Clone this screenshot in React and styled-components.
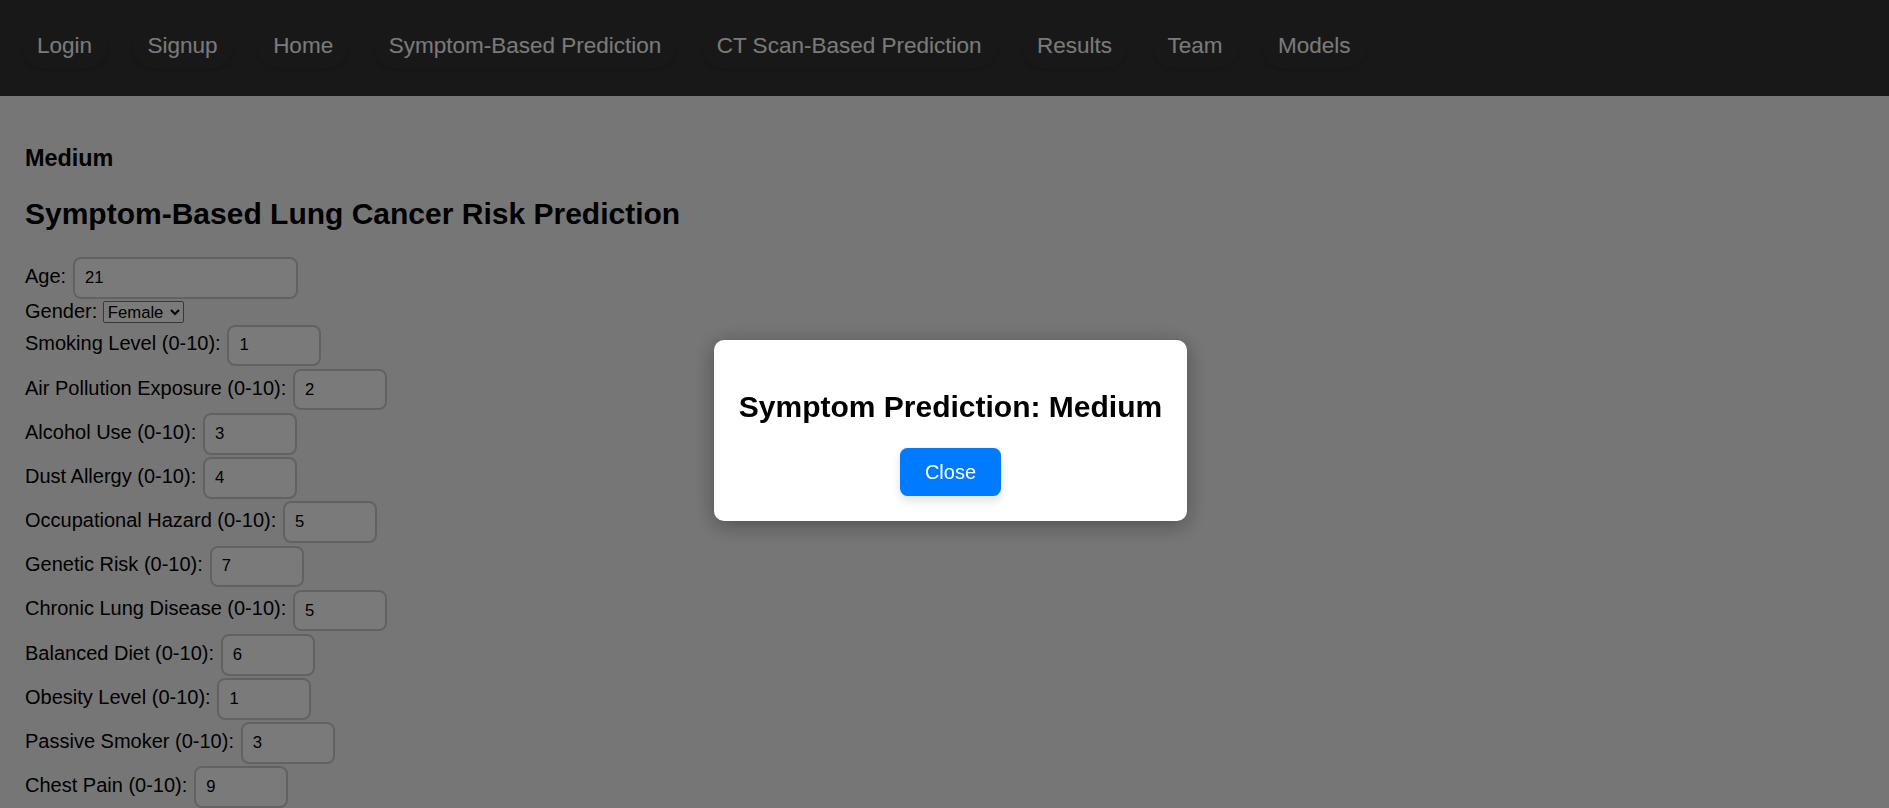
import React from "react";
import styled, { createGlobalStyle } from "styled-components";

const GlobalStyle = createGlobalStyle`
  html, body {
    margin: 0;
    padding: 0;
    overflow: hidden;
    background: #f7f7f7;
    font-family: "Liberation Sans", Arial, sans-serif;
    font-size: 20px;
    color: #000;
  }
`;

const NavBar = styled.nav`
  display: flex;
  align-items: center;
  height: 96px;
  box-sizing: border-box;
  padding: 0 0 5px 22px;
  gap: 25.5px;
  background: #333;
`;

const NavLink = styled.a`
  font-size: 22.5px;
  color: #fff;
  text-decoration: none;
  padding: 9px 15px;
  border-radius: 22px;
  box-shadow: 0 3px 6px rgba(0, 0, 0, 0.15);
  cursor: pointer;
`;

const Content = styled.main`
  padding: 26px 25px 25px;
`;

const Result = styled.h3`
  font-size: 23.4px;
  margin: 23.4px 0;
`;

const Title = styled.h2`
  font-size: 30px;
  margin: 24.9px 0;
`;

const Field = styled.div`
  line-height: normal;
`;

const Input = styled.input`
  box-sizing: border-box;
  width: ${(p) => (p.$wide ? "225px" : "94px")};
  margin: 1.25px;
  padding: 8.85px 10px;
  border: 2px solid #ccc;
  border-radius: 8px;
  background: #fff;
  font-family: "Liberation Sans", Arial, sans-serif;
  font-size: 16.67px;
  color: #000;
  outline: none;
`;

const Select = styled.select`
  width: 81px;
  font-family: "Liberation Sans", Arial, sans-serif;
  font-size: 16.67px;
  height: 22px;
  color: #000;
  background: #fff;
  border: 1px solid #767676;
  border-radius: 2px;
`;

const Overlay = styled.div`
  position: fixed;
  inset: 0;
  display: flex;
  align-items: center;
  justify-content: center;
  padding: 53px 0 0 12px;
  background: rgba(0, 0, 0, 0.52);
`;

const Modal = styled.div`
  background: #fff;
  padding: 25px;
  border-radius: 10px;
  text-align: center;
  box-shadow: 0 4px 22px rgba(0, 0, 0, 0.35);
`;

const ModalTitle = styled.h2`
  font-size: 30px;
  margin: 24.9px 0;
`;

const CloseButton = styled.button`
  font-family: "Liberation Sans", Arial, sans-serif;
  font-size: 20px;
  color: #fff;
  background: #007bff;
  border: none;
  border-radius: 7.5px;
  padding: 12.5px 25px;
  box-shadow: 0 5px 10px rgba(0, 0, 0, 0.12);
  cursor: pointer;
`;

const links = [
  "Login",
  "Signup",
  "Home",
  "Symptom-Based Prediction",
  "CT Scan-Based Prediction",
  "Results",
  "Team",
  "Models",
];

const fields = [
  ["Smoking Level (0-10)", 1],
  ["Air Pollution Exposure (0-10)", 2],
  ["Alcohol Use (0-10)", 3],
  ["Dust Allergy (0-10)", 4],
  ["Occupational Hazard (0-10)", 5],
  ["Genetic Risk (0-10)", 7],
  ["Chronic Lung Disease (0-10)", 5],
  ["Balanced Diet (0-10)", 6],
  ["Obesity Level (0-10)", 1],
  ["Passive Smoker (0-10)", 3],
  ["Chest Pain (0-10)", 9],
];

const App = () => {
  return (
    <>
      <GlobalStyle />
      <NavBar>
        {links.map((l) => (
          <NavLink key={l}>{l}</NavLink>
        ))}
      </NavBar>
      <Content>
        <Result>Medium</Result>
        <Title>Symptom-Based Lung Cancer Risk Prediction</Title>
        <Field>
          Age: <Input $wide type="text" defaultValue="21" />
        </Field>
        <Field>
          Gender:{" "}
          <Select defaultValue="Female">
            <option>Male</option>
            <option>Female</option>
          </Select>
        </Field>
        {fields.map(([label, value]) => (
          <Field key={label}>
            {label}: <Input type="text" defaultValue={value} />
          </Field>
        ))}
      </Content>
      <Overlay>
        <Modal>
          <ModalTitle>Symptom Prediction: Medium</ModalTitle>
          <CloseButton>Close</CloseButton>
        </Modal>
      </Overlay>
    </>
  );
};

export default App;
